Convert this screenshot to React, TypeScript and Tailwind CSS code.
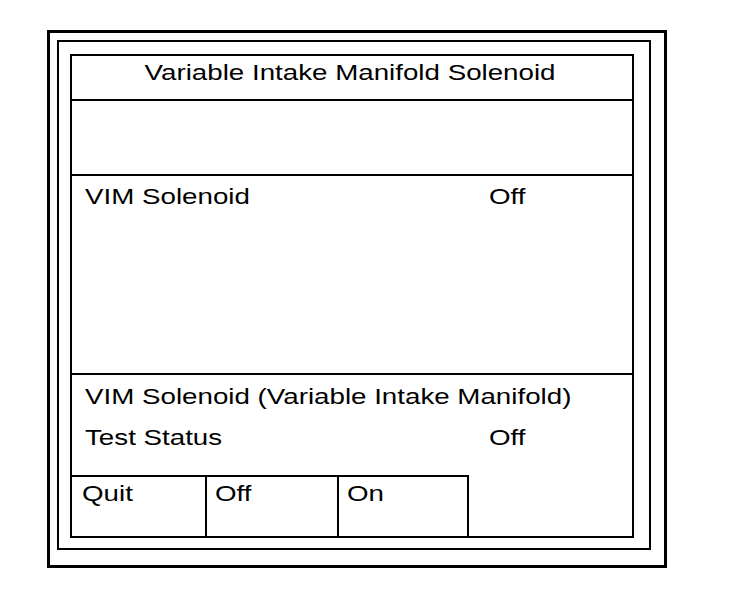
import React from 'react';

const txt = "inline-block origin-left scale-x-[1.26] whitespace-nowrap";

export default function App() {
  const buttons = [
    { label: "Quit", w: "w-[135px] pl-[10px]" },
    { label: "Off", w: "w-[132px] pl-[8px]" },
    { label: "On", w: "w-[130px] pl-[8px]" },
  ];

  return (
    <div
      className="min-h-screen bg-white pl-[47px] pt-[30px] text-black text-[22px] leading-[26px]"
      style={{ fontFamily: '"Liberation Sans", Arial, sans-serif' }}
    >
      {/* outer frame */}
      <div className="w-[620px] h-[538px] border-[3px] border-black pl-[7px] pt-[7px]">
        <div className="w-[594px] h-[510px] border-2 border-black pl-[11px] pt-[12px]">
          {/* scan tool screen */}
          <div className="w-[564px] h-[484px] border-2 border-black flex flex-col">
            <div className="h-[45px] border-b-2 border-black flex justify-center pt-[4px] pr-[4px]">
              <span className="inline-block origin-center scale-x-[1.26] whitespace-nowrap">
                Variable Intake Manifold Solenoid
              </span>
            </div>

            <div className="h-[75px] border-b-2 border-black"></div>

            <div className="h-[199px] border-b-2 border-black flex pt-[8px] pl-[13px]">
              <div className="w-[404px]">
                <span className={txt}>VIM Solenoid</span>
              </div>
              <span className={txt}>Off</span>
            </div>

            <div className="flex-1 flex flex-col">
              <div className="pt-[9px] pl-[13px] h-[50px]">
                <span className={txt}>VIM Solenoid (Variable Intake Manifold)</span>
              </div>
              <div className="flex pl-[13px]">
                <div className="w-[404px]">
                  <span className={txt}>Test Status</span>
                </div>
                <span className={txt}>Off</span>
              </div>

              <div className="mt-auto h-[61px] w-[397px] border-t-2 border-black flex">
                {buttons.map((b) => (
                  <div key={b.label} className={`${b.w} border-r-2 border-black pt-[4px]`}>
                    <span className={txt}>{b.label}</span>
                  </div>
                ))}
              </div>
            </div>
          </div>
        </div>
      </div>
    </div>
  );
}
